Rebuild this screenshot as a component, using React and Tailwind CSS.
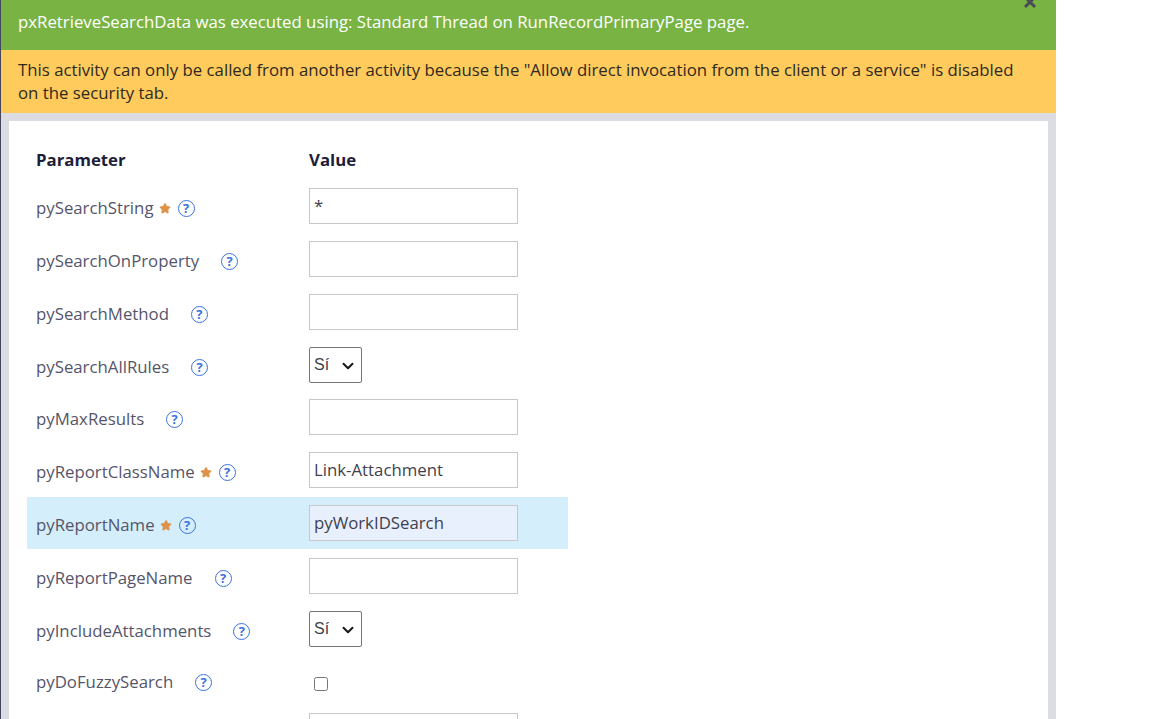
import { ChevronDown, Star } from 'lucide-react';

const rows = [
  { name: 'pySearchString', required: true, type: 'text', value: '*' },
  { name: 'pySearchOnProperty', type: 'text' },
  { name: 'pySearchMethod', type: 'text' },
  { name: 'pySearchAllRules', type: 'select', short: true },
  { name: 'pyMaxResults', type: 'text' },
  { name: 'pyReportClassName', required: true, type: 'text', value: 'Link-Attachment' },
  { name: 'pyReportName', required: true, type: 'text', value: 'pyWorkIDSearch', active: true },
  { name: 'pyReportPageName', type: 'text' },
  { name: 'pyIncludeAttachments', type: 'select' },
  { name: 'pyDoFuzzySearch', type: 'check', compact: true },
  { name: 'pyLast', type: 'text', hidden: true },
];

const HelpIcon = () => (
  <span className="flex h-[17px] w-[17px] shrink-0 items-center justify-center rounded-full border-[1.5px] border-[#3b73e0] text-[13px] font-bold leading-none text-[#3b73e0]">
    ?
  </span>
);

const Field = ({ row }) => {
  if (row.type === 'select') {
    return (
      <div className="relative h-9 w-[53px]">
        <select className="h-9 w-[53px] appearance-none rounded-[2px] border border-[#767676] bg-white pl-1 font-['Liberation_Sans',sans-serif] text-[16px] text-[#3f3f4e]">
          <option>Sí</option>
        </select>
        <ChevronDown size={18} strokeWidth={2.75} className="pointer-events-none absolute right-[5px] top-[10px] text-[#1a1a1a]" />
      </div>
    );
  }
  if (row.type === 'check') {
    return <input type="checkbox" readOnly className="ml-[5px] mt-[13px] h-[14px] w-[14px]" />;
  }
  return (
    <input
      type="text"
      readOnly
      value={row.value || ''}
      className={`h-9 w-[209px] border border-[#c8c8c8] pb-[2px] pl-1 text-[16.8px] text-[#3f3f4e] ${
        row.active ? 'bg-[#e8f0fe]' : 'bg-white'
      }`}
    />
  );
};

export default function App() {
  return (
    <div className="relative h-[719px] w-[1056px] overflow-hidden border-l border-[#45455c] bg-[#dcdde2] font-['Open_Sans',sans-serif]">
      <div className="flex h-[50px] items-center bg-[#79b343] pb-[7px] pl-[17px] text-[16.8px] text-white">
        pxRetrieveSearchData was executed using: Standard Thread on RunRecordPrimaryPage page.
      </div>
      <svg className="absolute left-[1022px] top-[-5px] h-[14px] w-[14px]" viewBox="0 0 14 14">
        <path d="M2 2 L12 12 M12 2 L2 12" stroke="#4b4b58" strokeWidth="3" />
      </svg>
      <div className="h-[63px] bg-[#ffcb5c] pl-[17px] pr-4 pt-2 text-[16.8px] leading-[23px] text-[#2e2a20]">
        This activity can only be called from another activity because the "Allow direct invocation from the client or a service" is disabled
        <br />
        on the security tab.
      </div>
      <div className="mx-2 mt-2 h-[700px] bg-white pl-[18px] pt-[26px]">
        <div className="flex h-[33px] w-[541px] pl-[9px] text-[16.8px] font-bold text-[#1d1d3a]">
          <div className="w-[273px]">Parameter</div>
          <div>Value</div>
        </div>
        {rows.map((row) => (
          <div
            key={row.name}
            className={`flex w-[541px] pl-[9px] ${row.compact ? 'h-[48px] pt-2' : 'h-[52px] pt-2'} ${row.short ? '' : 'mb-px'} ${
              row.active ? 'bg-[#d4eefb]' : ''
            }`}
          >
            <div className={`flex h-9 w-[273px] items-center text-[16.8px] text-[#55556a] ${row.compact ? '' : 'pt-1'} ${row.hidden ? 'invisible' : ''}`}>
              <span>{row.name}</span>
              <span className={`ml-[5px] flex w-[12px] justify-center text-[#dd9247] ${row.required ? '' : 'invisible'}`}>
                <Star size={13} fill="currentColor" strokeWidth={2} />
              </span>
              <span className={row.required ? 'ml-[7px]' : 'ml-[5px]'}>
                <HelpIcon />
              </span>
            </div>
            <Field row={row} />
          </div>
        ))}
      </div>
    </div>
  );
}
